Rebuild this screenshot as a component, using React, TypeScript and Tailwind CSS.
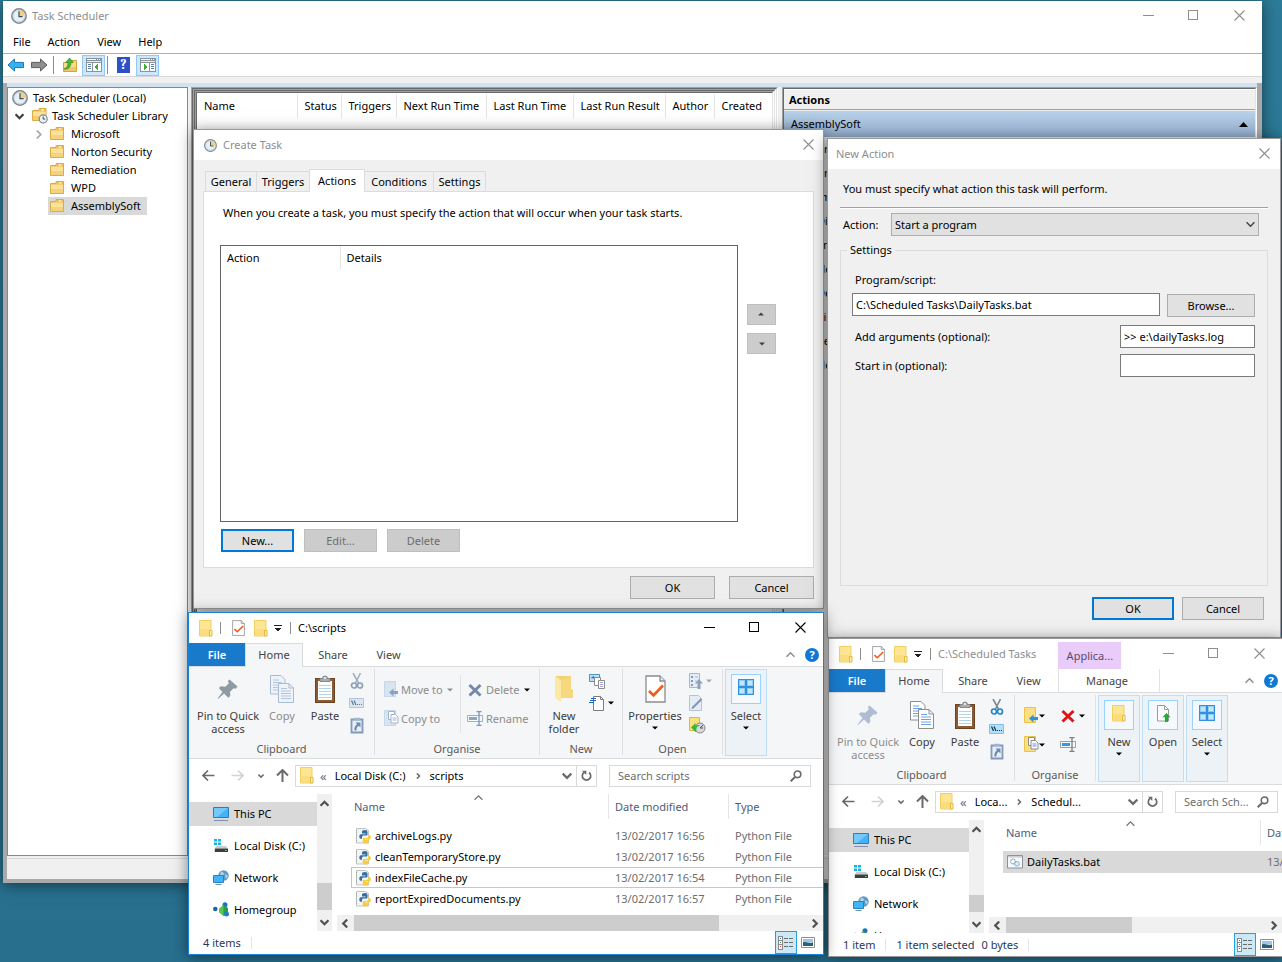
import React from 'react';
import type { ReactNode } from 'react';

/* ---------- icons ---------- */

const Clock = ({ size = 16 }: { size?: number }) => (
  <svg width={size} height={size} viewBox="0 0 16 16" className="shrink-0">
    <circle cx="8" cy="8" r="7.2" fill="#dfe9f2" stroke="#808a90" strokeWidth="1.5" />
    <circle cx="8" cy="8" r="5.8" fill="#e6f0f8" stroke="#b9c4cb" strokeWidth=".6" />
    <path d="M8 8V2.2A5.8 5.8 0 0 1 13.8 8z" fill="#f5cf7a" />
    <path d="M8 3.2V8.6h3.6" fill="none" stroke="#3e4f5e" strokeWidth="1.2" />
  </svg>
);

const TreeFolder = () => (
  <svg width="16" height="16" viewBox="0 0 16 16" className="shrink-0">
    <path d="M1.5 3.500h5.500v-2h7.500v12h-13z" fill="#f3cf72" stroke="#d9ac48" />
    <path d="M8 2h6v2H8z" fill="#e9b94c" />
    <path d="M9.500 3h3" stroke="#fffbe8" strokeWidth="1.200" />
    <path d="M2 5h12v4H2z" fill="#fbe19a" />
    <path d="M2 9h12v4H2z" fill="#f5d37c" />
  </svg>
);

const LibraryFolder = () => (
  <svg width="18" height="18" viewBox="0 0 18 18" className="shrink-0">
    <path d="M1.5 3.500h6.500v-2H15v12H1.500z" fill="#f3cf72" stroke="#d9ac48" />
    <path d="M9 2h5.500v2H9z" fill="#e9b94c" />
    <path d="M10 3h3" stroke="#fffbe8" strokeWidth="1.200" />
    <path d="M2 5h12.500v4H2z" fill="#fbe19a" />
    <circle cx="12.200" cy="11.900" r="4" fill="#eaf2f8" stroke="#7d8990" strokeWidth="1.200" />
    <path d="M12.200 9.500v2.600h2" fill="none" stroke="#3e4f5e" />
  </svg>
);

const Arrow = ({ left = false }: { left?: boolean }) => (
  <svg width="18" height="16" viewBox="0 0 18 16">
    {left ? (
      <path d="M1 8l6.500-6v3.400H16.500v5.200H7.500V14z" fill="#35b1ee" stroke="#1a76b8" />
    ) : (
      <path d="M17 8l-6.500-6v3.400H1.500v5.200H10.500V14z" fill="#8f8f8f" stroke="#5f5f5f" />
    )}
  </svg>
);

const UpFolder = () => (
  <svg width="16" height="16" viewBox="0 0 16 16">
    <path d="M1.500 5.500h7v-2H14.500v11h-13z" fill="#f7dc8a" stroke="#d2a63f" />
    <path d="M2 10h12v4H2z" fill="#efc964" />
    <path d="M2 12c3-.6 4-3.500 4-6.500H3.500L7.500 1l4 4.500H9c0 4-2.500 7.500-7 6.500z" fill="#49b53b" stroke="#2d8723" strokeWidth=".6" />
  </svg>
);

const PaneIcon = ({ flip = false }: { flip?: boolean }) => (
  <svg width="16" height="14" viewBox="0 0 16 14" shapeRendering="crispEdges">
    <path d="M0 0h16v14H0z" fill="#8a949c" />
    <path d="M1 1h9v1H1zM11 1h1v1h-1zM13 1h1v1h-1z" fill="#fff" />
    <path d="M1 3h14v1H1z" fill="#e8edf0" />
    <path d="M1 5h14v8H1z" fill="#fff" />
    {flip ? (
      <>
        <path d="M9 5h1v8H9z" fill="#8a949c" />
        <path d="M11 6h3v1h-3zM11 8h3v1h-3zM11 10h3v1h-3z" fill="#5c7fa6" />
        <path d="M4 6l4 3-4 3z" fill="#3fae2f" />
      </>
    ) : (
      <>
        <path d="M6 5h1v8H6z" fill="#8a949c" />
        <path d="M2 6h3v1H2zM2 8h3v1H2zM2 10h3v1H2z" fill="#5c7fa6" />
        <path d="M12 6L8 9l4 3z" fill="#3fae2f" />
      </>
    )}
  </svg>
);

const Minimize = () => (
  <svg width="11" height="11" viewBox="0 0 11 11" shapeRendering="crispEdges">
    <path d="M0 5.500h11" stroke="currentColor" />
  </svg>
);
const Maximize = () => (
  <svg width="11" height="11" viewBox="0 0 11 11" shapeRendering="crispEdges">
    <rect x=".5" y=".5" width="9" height="9" fill="none" stroke="currentColor" />
  </svg>
);
const Close = () => (
  <svg width="11" height="11" viewBox="0 0 11 11">
    <path d="M.5.500l10 10M10.500.500l-10 10" stroke="currentColor" strokeWidth="1.100" />
  </svg>
);

const Chevron = ({ dir, size = 8, w = 2 }: { dir: 'up' | 'down' | 'left' | 'right'; size?: number; w?: number }) => {
  const d = { up: 'M.5 6L4 2.500 7.500 6', down: 'M.5 2L4 5.500 7.500 2', left: 'M5.500.500L2 4l3.500 3.500', right: 'M2.500.500L6 4 2.500 7.500' }[dir];
  return (
    <svg width={size} height={size} viewBox="0 0 8 8" className="shrink-0">
      <path d={d} fill="none" stroke="currentColor" strokeWidth={w} />
    </svg>
  );
};

const Caret = () => (
  <svg width="6" height="4" viewBox="0 0 6 4" className="shrink-0">
    <path d="M0 .500h6L3 3.500z" fill="currentColor" />
  </svg>
);

const Folder = () => (
  <svg width="14" height="17" viewBox="0 0 14 17" className="shrink-0">
    <path d="M.5.500h11.500v15.500H.5z" fill="#fee591" stroke="#f0cf63" />
    <path d="M1 9h10.500v6.500H1z" fill="#fbdc7e" />
    <path d="M10.500 10.500h2.500v5.500h-2.500z" fill="#fdeeb5" stroke="#e5b93a" />
  </svg>
);

const CheckDoc = ({ w = 13, h = 16 }: { w?: number; h?: number }) => (
  <svg width={w} height={h} viewBox="0 0 21 28" className="shrink-0" preserveAspectRatio="none">
    <path d="M1 1h14l5 5v21H1z" fill="#fff" stroke="#8c8c8c" strokeWidth="1.300" />
    <path d="M15 1v5h5" fill="#e8e8e8" stroke="#8c8c8c" strokeWidth="1.300" />
    <path d="M4 16l4.500 4.500L18 10.500" fill="none" stroke="#f4591c" strokeWidth="2.600" />
  </svg>
);

const QuickMenu = () => (
  <svg width="8" height="8" viewBox="0 0 8 8" shapeRendering="crispEdges">
    <path d="M0 1h8v1H0zM1 4h6v1H1zM2 5h4v1H2zM3 6h2v1H3z" fill="#222" />
  </svg>
);

const Pin = ({ dim = false }: { dim?: boolean }) => (
  <svg width="22" height="22" viewBox="0 0 22 22">
    <path
      d="M12.500 1.500l8 7-1.800 2.200-2-.4-3.700 3.400.3 4.300-2 1.800-4.200-4.300L1 21 .6 20.600 5.500 14 1.800 10l2-1.700 4.500.4L12 5l-1.300-1.700z"
      fill={dim ? '#aebdd1' : '#8f9ba3'}
    />
  </svg>
);

const CopyPages = ({ dim = false, size = 28 }: { dim?: boolean; size?: number }) => {
  const line = dim ? '#b3c4de' : '#6fa1e8';
  const edge = dim ? '#a9bad3' : '#8d8d8d';
  const fill = dim ? '#eef3fa' : '#fff';
  return (
    <svg width={size} height={size} viewBox="0 0 28 28">
      <path d="M2.500.500h10.500l4 4v14.500H2.500z" fill={fill} stroke={edge} />
      <path d="M5 5h6M5 7.500h9M5 10h9M5 12.500h9M5 15h9" stroke={line} />
      <path d="M10.500 8.500H21l4.500 4.500v14.500h-15z" fill={fill} stroke={edge} />
      <path d="M21 8.500V13h4.500" fill="none" stroke={edge} />
      <path d="M13 13.500h6M13 16h10M13 18.500h10M13 21h10M13 23.500h10" stroke={line} strokeWidth="1.200" />
    </svg>
  );
};

const PasteBoard = () => (
  <svg width="22" height="28" viewBox="0 0 22 28">
    <rect x="1" y="3" width="20" height="25" rx="1" fill="#8a5a33" />
    <rect x="1.500" y="3.500" width="19" height="24" fill="none" stroke="#6c4322" />
    <path d="M4 6h14v19H4z" fill="#fdfeff" />
    <path d="M5 10.500h12M5 13.500h12M5 16.500h12M5 19.500h12M5 22.500h12" stroke="#b4d3e8" />
    <path d="M6 6.500V3.500h2.500a2.500 2.500 0 0 1 5 0H16v3z" fill="#a9adb0" stroke="#85898c" />
    <circle cx="11" cy="3" r="1.100" fill="#f3f3f3" />
  </svg>
);

const Scissors = ({ dim = false }: { dim?: boolean }) => (
  <svg width="14" height="16" viewBox="0 0 14 16">
    <path d="M3 0l5.500 10M10.500 0L5.500 10" stroke={dim ? '#9fb1c6' : '#7a8791'} strokeWidth="1.600" />
    <circle cx="4" cy="12.500" r="2.500" fill="none" stroke={dim ? '#8ca0bc' : '#2187cf'} strokeWidth="1.700" />
    <circle cx="10" cy="12.500" r="2.500" fill="none" stroke={dim ? '#8ca0bc' : '#2187cf'} strokeWidth="1.700" />
  </svg>
);

const PathIcon = ({ dim = false }: { dim?: boolean }) => (
  <svg width="15" height="10" viewBox="0 0 15 10">
    <path d="M.5.500h14v9H.5z" fill={dim ? '#dbe6f3' : '#b4e0fb'} stroke={dim ? '#b3c5dc' : '#7fbfe8'} />
    <path d="M2.500 2.500l2 4.500M5 2.500L7 7" stroke={dim ? '#5e7798' : '#12314d'} strokeWidth="1.200" />
    <path d="M8 6.500h1M10 6.500h1M12 6.500h1" stroke={dim ? '#5e7798' : '#12314d'} strokeWidth="1.200" />
  </svg>
);

const ShortcutIcon = () => (
  <svg width="14" height="17" viewBox="0 0 14 17">
    <path d="M1.500 2.500h11v13h-11z" fill="#e9eff7" stroke="#8299bb" strokeWidth="1.800" />
    <path d="M4 .800h6v2.700H4z" fill="#a2b5ce" />
    <path d="M5.500 5.500h5v5L8.700 8.800C7 10 6.300 11.500 6.500 13.500H4.500C4 11 5 8.800 7 7.200z" fill="#6f8bb2" />
  </svg>
);

const MoveTo = ({ color = false }: { color?: boolean }) => (
  <svg width="15" height="17" viewBox="0 0 15 17">
    <path d="M.5.500h11v15H.5z" fill={color ? '#fbdf82' : '#d9e4f1'} stroke={color ? '#ebc34e' : '#c7d6e9'} />
    <path d="M5 11.500l4.500-4v2.500h4.500v3H9.500v2.500z" fill={color ? '#2f8fdc' : '#8da3c4'} />
  </svg>
);

const CopyTo = ({ color = false }: { color?: boolean }) => (
  <svg width="15" height="17" viewBox="0 0 15 17">
    <path d="M.5.500h11v15H.5z" fill={color ? '#fbdf82' : '#d9e4f1'} stroke={color ? '#ebc34e' : '#c7d6e9'} />
    <path d="M4.500 1.500h6v8h-6z" fill="#fff" stroke={color ? '#8b8b8b' : '#9fb2cf'} />
    <path d="M7 4.500h4.500l2.500 2.500v6H7z" fill="#fff" stroke={color ? '#8b8b8b' : '#9fb2cf'} />
    <path d="M8.500 8h4M8.500 10h4" stroke={color ? '#5f93dd' : '#9fb2cf'} />
  </svg>
);

const DeleteX = ({ color = false }: { color?: boolean }) => (
  <svg width="14" height="14" viewBox="0 0 14 14">
    <path d="M1.500 2l11 10.500M12.500 2l-11 10.500" stroke={color ? '#dd1518' : '#7488ab'} strokeWidth="3" />
  </svg>
);

const Rename = ({ color = false }: { color?: boolean }) => (
  <svg width="17" height="15" viewBox="0 0 17 15">
    <path d="M.5 4.500h15v6H.5z" fill="#f7fafd" stroke={color ? '#9aa0a6' : '#9bb0cc'} />
    <path d="M2 6h8v3H2z" fill={color ? '#2f9bf0' : '#8ea5c4'} />
    <path d="M9.500.700h5M9.500 14.300h5M12 1v13" stroke={color ? '#7b8085' : '#7f95b5'} strokeWidth="1.300" />
  </svg>
);

const BigFolder = () => (
  <svg width="20" height="28" viewBox="0 0 20 28">
    <path d="M2 1h15v13l2 1v8H6z" fill="#f3d171" />
    <path d="M1 1l6 4v22l-6-4z" fill="#fde9a4" />
    <path d="M7 5l10-4v15l2 1v6H7z" fill="#f7d87e" />
  </svg>
);

const NewItem = () => (
  <svg width="17" height="17" viewBox="0 0 17 17">
    <path d="M.5 1.500h10v7H.5z" fill="#bfe2f5" stroke="#4d92b8" />
    <path d="M1.500 5l3-2 3 3z" fill="#2e7da8" />
    <path d="M5.500 4.500h6v8h-6z" fill="#fff" stroke="#8c8c8c" />
    <path d="M9.500 7.500h6v8h-6z" fill="#fff" stroke="#8c8c8c" />
    <path d="M11 9.500h3M11 11.500h3M11 13.500h3" stroke="#a7a3c8" />
  </svg>
);

const EasyAccess = () => (
  <svg width="16" height="16" viewBox="0 0 16 16">
    <path d="M4.500 1.500h7l3 3v11h-10z" fill="#fff" stroke="#7c7c7c" />
    <path d="M11.500 1.500v3h3" fill="none" stroke="#7c7c7c" />
    <path d="M2 3.500h5M1 5.500h6M0 7.500h5" stroke="#1f66ad" strokeWidth="1.200" />
  </svg>
);

const OpenIcon = () => (
  <svg width="14" height="16" viewBox="0 0 14 16">
    <path d="M.5.500h10v14H.5z" fill="#e6edf6" stroke="#a5b6d0" />
    <path d="M2 3h2v2H2zM2 7h2v2H2zM2 11h2v2H2z" fill="#8299be" />
    <path d="M6 4h3M6 8h2" stroke="#a5b6d0" />
    <path d="M10 6l4 4.500h-2.500V16h-3v-5.500H6z" fill="#8da0bf" />
  </svg>
);

const EditIcon = () => (
  <svg width="14" height="16" viewBox="0 0 14 16">
    <path d="M.5.500h9l3 3v12H.5z" fill="#e4ecf6" stroke="#b3c3da" />
    <path d="M4 12.500l8.500-8.500" stroke="#8397b5" strokeWidth="2.200" />
    <path d="M2.500 14l1-2.500 1.500 1.500z" fill="#6d83a6" />
  </svg>
);

const HistoryIcon = () => (
  <svg width="17" height="17" viewBox="0 0 17 17">
    <path d="M.5.500h10v13H.5z" fill="#fbe07c" stroke="#ddb741" />
    <circle cx="11" cy="11" r="5" fill="#d7dadc" stroke="#84888b" />
    <path d="M11 11l3-3M11 11h3" stroke="#555" />
    <path d="M2 10.500L6.500 6v2.500c3-1 4-.500 4.500.500-2.500 0-4 1-3.500 5.500l-1 .5z" fill="#3bb53a" />
  </svg>
);

const SelectGrid = () => (
  <svg width="16" height="16" viewBox="0 0 16 16" shapeRendering="crispEdges">
    <path d="M0 0h16v16H0z" fill="#3390df" />
    <path d="M1 1h6v6H1zM9 1h6v6H9zM1 9h6v6H1zM9 9h6v6H9z" fill="#8fcdf9" />
    <path d="M2 2h4v4H2zM10 2h4v4h-4zM2 10h4v4H2zM10 10h4v4h-4z" fill="#c4e6fd" />
  </svg>
);

const OpenDoc = () => (
  <svg width="15" height="17" viewBox="0 0 15 17">
    <path d="M1.500.500h7l4 4v11.500h-11z" fill="#fbfbfb" stroke="#9b9b9b" />
    <path d="M8.500.500v4h4" fill="none" stroke="#9b9b9b" />
    <path d="M10.500 8l4 4.300H12V17H9v-4.700H6.500z" fill="#19b02a" />
  </svg>
);

const NavArrow = ({ dir }: { dir: 'left' | 'right' | 'up' }) => (
  <svg width="13" height="13" viewBox="0 0 13 13" className="shrink-0">
    {dir === 'left' && <path d="M6 1.500l-5 5 5 5M1 6.500h11.500" fill="none" stroke="currentColor" strokeWidth="1.700" />}
    {dir === 'right' && <path d="M7 1.500l5 5-5 5M12 6.500H.5" fill="none" stroke="currentColor" strokeWidth="1.700" />}
    {dir === 'up' && <path d="M1 6.500l5.500-5.500L12 6.500M6.500 1v12" fill="none" stroke="currentColor" strokeWidth="2" />}
  </svg>
);

const Refresh = () => (
  <svg width="11" height="12" viewBox="0 0 11 12">
    <path d="M8 2.500a4.200 4.200 0 1 1-5 0" fill="none" stroke="#6a6a6a" strokeWidth="1.700" />
    <path d="M1 .800h4.300V5z" fill="#6a6a6a" />
  </svg>
);

const Magnifier = () => (
  <svg width="12" height="12" viewBox="0 0 12 12" className="shrink-0">
    <circle cx="7.500" cy="4.300" r="3.300" fill="none" stroke="#6a6a6a" strokeWidth="1.600" />
    <path d="M5 7L.7 11.300" stroke="#6a6a6a" strokeWidth="2" />
  </svg>
);

const PcIcon = () => (
  <svg width="16" height="16" viewBox="0 0 16 16">
    <path d="M.5 1.500h15v10H.5z" fill="#45b2f7" stroke="#2a7fb8" />
    <path d="M1 2h14L4 11H1z" fill="#74c9fb" />
    <path d="M1 14.500h14" stroke="#7f8fae" />
  </svg>
);
const DiskIcon = () => (
  <svg width="16" height="16" viewBox="0 0 16 16">
    <path d="M1 1h3v2.500H1zM5 1h3v2.500H5zM1 4.500h3V7H1zM5 4.500h3V7H5z" fill="#14b3ea" />
    <path d="M3.500 8h9.500l2 2.500H1.800z" fill="#c9ccce" />
    <path d="M1.800 10.500H15V14H1.800z" fill="#3c3f41" />
    <path d="M12 12h1.500v1H12z" fill="#5fe35a" />
  </svg>
);
const NetworkIcon = () => (
  <svg width="16" height="16" viewBox="0 0 16 16">
    <circle cx="10.500" cy="5.500" r="5.200" fill="#5f9cc2" />
    <path d="M8 1.500l3 1.500-1 3-3 0zM12 4l3 2-2 3z" fill="#b8d6e6" />
    <path d="M.5 5.500h10v7H.5z" fill="#3fb4fa" stroke="#2a82bb" />
    <path d="M2.500 14.500h6" stroke="#6d93ad" />
  </svg>
);
const HomegroupIcon = () => (
  <svg width="16" height="16" viewBox="0 0 16 16">
    <circle cx="2.300" cy="7" r="2.300" fill="#1a63b5" />
    <circle cx="12" cy="2.700" r="2.500" fill="#1a72c4" />
    <path d="M6 7l4.500-4L15 6v6l-4.500 2L6 10z" fill="#2f9e3d" />
    <path d="M6 7l4.500-4v10.500L6 10z" fill="#5cc552" />
    <circle cx="13.500" cy="12" r="2.500" fill="#1f7ed0" />
  </svg>
);

const PyIcon = () => (
  <svg width="16" height="16" viewBox="0 0 16 16" className="shrink-0">
    <path d="M1.500.500h9l3 2v12.500h-12z" fill="#f3f4f4" stroke="#bfc3c5" />
    <path d="M1.500 2v12" stroke="#9ea3a6" strokeDasharray="1 1.500" />
    <path d="M10 2c-2.500 0-3 .7-3 2v1.500h3.500v.700H6C4.700 6.200 4.300 7.200 4.300 8.500s.5 2.200 1.500 2.200H7V9.200c0-1 .7-1.700 1.700-1.700h2.500c.8 0 1.300-.5 1.300-1.300V4c0-1.200-.8-2-2.500-2z" fill="#356f9f" />
    <path d="M10.500 15.500c2.500 0 3-.7 3-2V12H10v-.5h4.200c1.200 0 1.600-1 1.600-2.300S15.300 7 14.300 7H13.200v1.200c0 1-.7 1.700-1.700 1.700H9c-.8 0-1.300.5-1.300 1.300v2.300c0 1.200.8 2 2.800 2z" fill="#f9cd3d" />
  </svg>
);
const BatIcon = () => (
  <svg width="16" height="14" viewBox="0 0 16 14" className="shrink-0">
    <path d="M.5.500h15v12.500H.5z" fill="#f7f9fa" stroke="#8d9397" />
    <path d="M1 1h14v1.500H1z" fill="#c8cdd0" />
    <circle cx="6" cy="6.500" r="2.300" fill="#fff" stroke="#8d989f" strokeDasharray="1.200 .6" strokeWidth="1.200" />
    <circle cx="10" cy="8.800" r="2.300" fill="#d9eefc" stroke="#7fa9c4" strokeDasharray="1.200 .6" strokeWidth="1.200" />
  </svg>
);
const DetailsView = () => (
  <svg width="16" height="14" viewBox="0 0 16 14" shapeRendering="crispEdges">
    <path d="M.5.500h4v12.500h-4zM1 4.500h3M1 8.500h3" fill="#fff" stroke="#8b8b8b" />
    <path d="M2 2h1v1H2z" fill="#2b6cb0" />
    <path d="M2 6h1v1H2z" fill="#4a8f4a" />
    <path d="M2 10h1v1H2z" fill="#d33" />
    <path d="M6 2.500h4M11 2.500h4M6 6.500h4M11 6.500h4M6 10.500h4M11 10.500h4" stroke="#6c6c6c" />
  </svg>
);
const ThumbView = () => (
  <svg width="14" height="11" viewBox="0 0 14 11">
    <path d="M.5.500h13v10H.5z" fill="#fff" stroke="#8f8f8f" />
    <path d="M2 2h10v3.500H2z" fill="#9bc7ee" />
    <path d="M2 5.500C5 4 8 7 12 5.500V9H2z" fill="#2c5f78" />
  </svg>
);

/* ---------- shared pieces ---------- */

const Controls = ({ className }: { className: string }) => (
  <div className={`flex h-7 self-start ${className}`}>
    <button aria-label="Minimize" className="grid w-[46px] place-items-center"><Minimize /></button>
    <button aria-label="Maximize" className="grid w-[45px] place-items-center"><Maximize /></button>
    <button aria-label="Close" className="grid w-[46px] place-items-center"><Close /></button>
  </div>
);

const PushButton = ({ children, primary, disabled, className }: { children: ReactNode; primary?: boolean; disabled?: boolean; className: string }) => (
  <button
    disabled={disabled}
    className={`grid h-[23px] place-items-center ${
      primary ? 'border-2 border-[#0078d7] bg-[#e1e1e1]' : disabled ? 'border border-[#bfbfbf] bg-[#cccccc] text-[#6d6d6d]' : 'border border-[#adadad] bg-[#e1e1e1]'
    } ${className}`}
  >
    {children}
  </button>
);

const Sunken = ({ depth, children }: { depth: number; children: ReactNode }) => (
  <div className="flex min-h-0 flex-1 border border-t-[#a0a0a0] border-r-white border-b-white border-l-[#a0a0a0]">
    <div className="flex min-h-0 flex-1 border border-t-[#696969] border-r-[#e3e3e3] border-b-[#e3e3e3] border-l-[#696969]">
      {depth > 1 ? <Sunken depth={depth - 1}>{children}</Sunken> : children}
    </div>
  </div>
);

/* ---------- Task Scheduler ---------- */

const LIST_COLUMNS: [string, string][] = [
  ['Name', 'w-[100px]'],
  ['Status', 'w-[44px]'],
  ['Triggers', 'w-[55px]'],
  ['Next Run Time', 'w-[90px]'],
  ['Last Run Time', 'w-[87px]'],
  ['Last Run Result', 'w-[92px]'],
  ['Author', 'w-[49px]'],
  ['Created', 'w-auto'],
];

const SIDE_ACTIONS = [
  'Create Basic Task...', 'Create Task...', 'Import Task...', 'Display All Running Tasks', 'Enable All Tasks History',
  'New Folder...', 'Delete Folder', 'View', 'Refresh', 'Help',
];

const TaskScheduler = () => (
  <section className="absolute top-px left-[3px] flex h-[882px] w-[1259px] flex-col bg-white shadow-[0_2px_14px_rgba(0,0,0,0.5)]">
    <header className="flex h-[30px] shrink-0 items-center pl-2 text-[#8e8e8e]">
      <Clock />
      <h1 className="ml-[5px] flex-1">Task Scheduler</h1>
      <Controls className="text-[#8e8e8e]" />
    </header>
    <nav className="flex h-[22px] shrink-0 items-center gap-[17px] pl-[10px]">
      <button>File</button>
      <button>Action</button>
      <button>View</button>
      <button>Help</button>
    </nav>
    <div className="flex h-6 shrink-0 items-center border-y border-t-[#abb0b8] border-b-[#d7d7d7] pl-1">
      <button aria-label="Back"><Arrow left /></button>
      <button aria-label="Forward" className="ml-[5px]"><Arrow /></button>
      <span className="mr-2 ml-[5px] h-[18px] w-px bg-[#8c8c8c]" />
      <button aria-label="Up one level"><UpFolder /></button>
      <button aria-label="Show console tree" className="ml-1 grid h-[21px] w-[23px] place-items-center border border-[#90c8f6] bg-[#cce8ff]"><PaneIcon /></button>
      <span className="ml-0.5 h-[18px] w-px bg-[#8c8c8c]" />
      <button aria-label="Help" className="ml-[9px] grid h-4 w-[13px] place-items-center bg-[#2c50c8] font-serif text-[14px] leading-4 font-bold text-white">?</button>
      <button aria-label="Show action pane" className="ml-[6px] grid h-[21px] w-[23px] place-items-center border border-[#90c8f6] bg-[#cce8ff]"><PaneIcon flip /></button>
    </div>
    <div className="h-[6px] shrink-0 bg-[#f0f0f0]" />
    <div className="flex min-h-0 flex-1 flex-col border-r-5 border-b-4 border-l-4 border-[#a9a9a9] bg-[#f0f0f0]">
      <div className="h-1 shrink-0 bg-[#d3e2f0]" />
      <div className="flex min-h-0 flex-1">
        <ul className="w-[181px] border border-[#828790] bg-white pt-px">
          <li className="flex h-[18px] items-center pl-1"><Clock /><span className="ml-[5px]">Task Scheduler (Local)</span></li>
          <li className="flex h-[18px] items-center pl-[7px] text-[#404040]">
            <Chevron dir="down" size={9} />
            <span className="ml-[7px]"><LibraryFolder /></span>
            <span className="ml-[3px] text-black">Task Scheduler Library</span>
          </li>
          {['Microsoft', 'Norton Security', 'Remediation', 'WPD', 'AssemblySoft'].map((name, i) => (
            <li key={name} className="flex h-[18px] items-center pl-[26px] text-[#a6a6a6]">
              <span className="w-[14px]">{i === 0 && <Chevron dir="right" size={9} w={1.5} />}</span>
              <span className={`flex h-[18px] items-center gap-[6px] pr-[6px] pl-px text-black ${i === 4 ? 'bg-[#d9d9d9]' : ''}`}>
                <TreeFolder />{name}
              </span>
            </li>
          ))}
        </ul>
        <div className="ml-[3px] flex min-w-0 flex-1">
          <Sunken depth={3}>
            <div className="flex-1 bg-white pt-px">
              <table className="w-full table-fixed border-collapse">
                <thead>
                  <tr className="h-6">
                    {LIST_COLUMNS.map(([name, width]) => (
                      <th key={name} className={`${width} overflow-hidden border-r border-[#e5e5e5] pl-[7px] text-left font-normal whitespace-nowrap last:border-r-0`}>{name}</th>
                    ))}
                  </tr>
                </thead>
              </table>
            </div>
          </Sunken>
        </div>
        <div className="ml-1 flex w-[475px]">
          <Sunken depth={1}>
            <div className="flex min-w-0 flex-1 flex-col border-t border-white">
              <h2 className="flex h-5 shrink-0 items-center border-b border-[#a0a0a0] pl-[5px] font-bold">Actions</h2>
              <button className="mt-px flex h-[26px] shrink-0 items-center justify-between bg-linear-to-b from-[#b9d1ea] to-[#93accb] pr-[7px] pl-[7px]">
                AssemblySoft
                <svg width="9" height="5" viewBox="0 0 9 5"><path d="M4.500 0L9 5H0z" /></svg>
              </button>
              <ul>
                {SIDE_ACTIONS.map((name) => (
                  <li key={name} className="flex h-[24px] items-center pl-[33px]">{name}</li>
                ))}
              </ul>
            </div>
          </Sunken>
        </div>
      </div>
      <footer className="mt-0.5 h-[21px] shrink-0 border-t border-[#d7d7d7]" />
    </div>
  </section>
);

/* ---------- Create Task ---------- */

const CreateTask = () => (
  <section className="absolute top-[129px] left-[193px] flex h-[480px] w-[631px] flex-col border border-[#999] bg-[#f0f0f0] shadow-[0_2px_14px_rgba(0,0,0,0.5)]">
    <header className="flex h-[30px] items-center justify-between bg-white pr-[9px] pl-[10px] text-[#8e8e8e]">
      <h2 className="flex items-center gap-[6px]"><Clock size={13} />Create Task</h2>
      <button aria-label="Close" className="pb-px"><Close /></button>
    </header>
    <div className="flex flex-1 flex-col px-[9px] pt-[9px] pb-[9px]">
      <div className="flex items-end pl-0.5" role="tablist">
        {['General', 'Triggers', 'Actions', 'Conditions', 'Settings'].map((name, i) =>
          i === 2 ? (
            <button key={name} role="tab" aria-selected className="relative -mb-px h-[23px] w-[56px] border border-b-0 border-[#dcdcdc] bg-white pb-px">{name}</button>
          ) : (
            <button key={name} role="tab" className={`h-5 border border-b-0 border-[#dcdcdc] text-center ${i === 3 ? 'w-[69px] border-l-0' : 'w-[52px]'} ${i === 1 ? 'border-x-0' : ''} ${i === 4 ? 'border-l-0' : ''}`}>{name}</button>
          ),
        )}
      </div>
      <div className="flex flex-1 flex-col border border-[#dcdcdc] bg-white px-4 pt-[13px] pb-[15px]">
        <p className="pl-[3px]">When you create a task, you must specify the action that will occur when your task starts.</p>
        <div className="mt-6 flex flex-1 items-start gap-[9px]">
          <div className="h-full w-[518px] border border-[#646464]">
            <table className="w-full table-fixed border-collapse">
              <thead>
                <tr className="h-6">
                  <th className="w-[119px] border-r border-[#e5e5e5] pl-[6px] text-left font-normal">Action</th>
                  <th className="pl-[6px] text-left font-normal">Details</th>
                </tr>
              </thead>
            </table>
          </div>
          <div className="flex flex-col gap-2 pt-[59px]">
            <button aria-label="Move up" className="grid h-[21px] w-[29px] rotate-180 place-items-center border border-[#bfbfbf] bg-[#cccccc] text-[#404040]"><Caret /></button>
            <button aria-label="Move down" className="grid h-[21px] w-[29px] place-items-center border border-[#bfbfbf] bg-[#cccccc] text-[#404040]"><Caret /></button>
          </div>
        </div>
        <div className="mt-[7px] flex gap-[10px] pl-px">
          <PushButton primary className="w-[73px]">New...</PushButton>
          <PushButton disabled className="w-[73px]">Edit...</PushButton>
          <PushButton disabled className="w-[73px]">Delete</PushButton>
        </div>
      </div>
      <div className="mt-2 flex justify-end gap-[14px]">
        <PushButton className="w-[85px]">OK</PushButton>
        <PushButton className="w-[85px]">Cancel</PushButton>
      </div>
    </div>
  </section>
);

/* ---------- New Action ---------- */

const NewAction = () => (
  <section className="absolute top-[138px] left-[827px] flex h-[500px] w-[454px] flex-col border border-[#999] bg-[#f0f0f0] shadow-[0_2px_14px_rgba(0,0,0,0.5)]">
    <header className="flex h-[30px] items-center justify-between bg-white pr-[10px] pl-2 text-[#8e8e8e]">
      <h2>New Action</h2>
      <button aria-label="Close" className="pb-px"><Close /></button>
    </header>
    <div className="flex flex-1 flex-col px-3 pt-3 pb-[17px]">
      <p className="pl-[3px]">You must specify what action this task will perform.</p>
      <hr className="mt-[10px] h-0.5 border-t border-b border-t-[#a0a0a0] border-b-white" />
      <div className="mt-1 flex items-center pl-[3px] pr-[9px]">
        <label htmlFor="kind" className="w-12">Action:</label>
        <div className="relative flex-1">
          <select id="kind" className="h-[23px] w-full appearance-none border border-[#adadad] bg-[#e1e1e1] pl-[3px]">
            <option>Start a program</option>
          </select>
          <span className="pointer-events-none absolute top-[7px] right-1 text-[#404040]"><Chevron dir="down" size={9} w={1.2} /></span>
        </div>
      </div>
      <fieldset className="mt-[6px] flex-1 border border-[#dcdcdc] pt-[14px] pr-3 pl-[11px]">
        <legend className="-ml-[5px] px-[3px]">Settings</legend>
        <label htmlFor="program" className="block pl-[3px]">Program/script:</label>
        <div className="mt-[5px] flex gap-[7px]">
          <input id="program" defaultValue="C:\Scheduled Tasks\DailyTasks.bat" className="h-[23px] min-w-0 flex-1 border border-[#7a7a7a] bg-white px-[3px]" />
          <PushButton className="mt-px w-[88px]">Browse...</PushButton>
        </div>
        <div className="mt-2 flex items-center justify-between pl-[3px]">
          <label htmlFor="args">Add arguments (optional):</label>
          <input id="args" defaultValue=">> e:\dailyTasks.log" className="h-[23px] w-[135px] border border-[#7a7a7a] bg-white px-[3px]" />
        </div>
        <div className="mt-[6px] flex items-center justify-between pl-[3px]">
          <label htmlFor="start">Start in (optional):</label>
          <input id="start" className="h-[23px] w-[135px] border border-[#7a7a7a] bg-white px-[3px]" />
        </div>
      </fieldset>
      <div className="mt-[11px] flex justify-end gap-2 pr-1">
        <PushButton primary className="w-[82px]">OK</PushButton>
        <PushButton className="w-[82px]">Cancel</PushButton>
      </div>
    </div>
  </section>
);

/* ---------- Explorer ---------- */

const Group = ({ label, className, children }: { label: string; className: string; children: ReactNode }) => (
  <div className={`relative flex flex-col ${className}`}>
    <div className="flex h-[74px] items-start">{children}</div>
    <p className="text-center text-[#5a5a5a]">{label}</p>
  </div>
);

const Rule = () => <span className="mt-0.5 h-[86px] w-px bg-[#dfe1e4]" />;

const BigButton = ({ icon, children, className, dim, menu }: { icon: ReactNode; children: ReactNode; className: string; dim?: boolean; menu?: boolean }) => (
  <button className={`flex shrink-0 flex-col items-center pt-2 leading-[13px] ${dim ? 'text-[#8c8c8c]' : 'text-[#3b3b3b]'} ${className}`}>
    <span className="mb-[6px] grid h-7 place-items-center">{icon}</span>
    {children}
    {menu && <span className="mt-[4px] text-black"><Caret /></span>}
  </button>
);

const SmallIcon = ({ label, children, menu, dim }: { label: string; children: ReactNode; menu?: boolean; dim?: boolean }) => (
  <button aria-label={label} className={`flex h-[22px] items-center gap-[3px] ${dim ? 'text-[#a8a8a8]' : 'text-black'}`}>
    {children}
    {menu && <Caret />}
  </button>
);

const Tile = ({ icon, label, menu }: { icon: ReactNode; label: string; menu?: boolean }) => (
  <button className="mt-0.5 flex h-[87px] w-[42px] flex-col items-center border border-[#bfdef7] bg-[#edf2f7] pt-1 leading-[13px] text-[#3b3b3b]">
    <span className="mb-[5px] grid h-[30px] w-[30px] place-items-center border border-[#99d1ff] bg-[#f5f9fd] pb-1">{icon}</span>
    {label}
    {menu && <span className="mt-1 text-black"><Caret /></span>}
  </button>
);

const Clipboard = ({ hasSelection }: { hasSelection: boolean }) => (
  <Group label="Clipboard" className="w-[185px]">
    <BigButton dim={hasSelection} icon={<Pin dim={hasSelection} />} className="ml-[5px] w-[68px]">Pin to Quick<br />access</BigButton>
    <BigButton dim={!hasSelection} icon={<CopyPages dim={!hasSelection} />} className="w-10">Copy</BigButton>
    <BigButton icon={<PasteBoard />} className="ml-px w-11">Paste</BigButton>
    <div className="ml-0.5 flex flex-col items-center pt-[3px]">
      <SmallIcon label="Cut"><Scissors dim={!hasSelection} /></SmallIcon>
      <SmallIcon label="Copy path"><PathIcon dim={!hasSelection} /></SmallIcon>
      <SmallIcon label="Paste shortcut"><ShortcutIcon /></SmallIcon>
    </div>
  </Group>
);

const WideRibbon = () => (
  <>
    <Clipboard hasSelection={false} />
    <Rule />
    <Group label="Organise" className="w-[164px]">
      <div className="mt-2 ml-[9px] flex w-[77px] flex-col border-r border-[#dfe1e4] text-[#8c8c8c]">
        <button className="flex h-[29px] items-center gap-0.5"><MoveTo />Move to<span className="ml-0.5"><Caret /></span></button>
        <button className="flex h-[29px] items-center gap-0.5"><CopyTo />Copy to</button>
      </div>
      <div className="mt-2 ml-[6px] text-[#8c8c8c]">
        <button className="flex h-[29px] items-center"><span className="w-[19px] pl-px"><DeleteX /></span>Delete<span className="ml-[5px] text-black"><Caret /></span></button>
        <button className="flex h-[29px] items-center"><span className="w-[19px]"><Rename /></span>Rename</button>
      </div>
    </Group>
    <Rule />
    <Group label="New" className="w-[82px]">
      <BigButton icon={<BigFolder />} className="ml-0.5 w-11">New<br />folder</BigButton>
      <div className="pt-[3px] pl-[3px]">
        <SmallIcon label="New item"><NewItem /></SmallIcon>
        <SmallIcon label="Easy access" menu><EasyAccess /></SmallIcon>
      </div>
    </Group>
    <Rule />
    <Group label="Open" className="w-[99px]">
      <BigButton menu icon={<CheckDoc w={21} h={28} />} className="ml-[3px] w-[58px]">Properties</BigButton>
      <div className="pt-[3px] pl-[5px]">
        <SmallIcon label="Open" menu dim><OpenIcon /></SmallIcon>
        <SmallIcon label="Edit"><EditIcon /></SmallIcon>
        <SmallIcon label="History"><HistoryIcon /></SmallIcon>
      </div>
    </Group>
    <Rule />
    <div className="ml-0.5"><Tile icon={<SelectGrid />} label="Select" menu /></div>
  </>
);

const NarrowRibbon = () => (
  <>
    <Clipboard hasSelection />
    <Rule />
    <Group label="Organise" className="w-[80px]">
      <div className="mt-2 ml-[9px] w-9">
        <button aria-label="Move to" className="flex h-[29px] items-center"><MoveTo color /><Caret /></button>
        <button aria-label="Copy to" className="flex h-[29px] items-center"><CopyTo color /><Caret /></button>
      </div>
      <div className="mt-2">
        <button aria-label="Delete" className="flex h-[29px] items-center gap-1 pl-px"><DeleteX color /><Caret /></button>
        <button aria-label="Rename" className="flex h-[29px] items-center"><Rename color /></button>
      </div>
    </Group>
    <Rule />
    <div className="ml-0.5 flex gap-0.5">
      <Tile icon={<Folder />} label="New" menu />
      <Tile icon={<OpenDoc />} label="Open" />
      <Tile icon={<SelectGrid />} label="Select" menu />
    </div>
  </>
);

interface ExplorerProps {
  title: string;
  frame: string;
  active?: boolean;
  contextTab?: boolean;
  ribbon: ReactNode;
  crumbs: string[];
  addressWidth: string;
  search: string;
  searchWidth: string;
  navWidth: string;
  navThumb: string;
  table: ReactNode;
  sortCaret: string;
  listThumb: string;
  status: ReactNode;
}

const Explorer = (p: ExplorerProps) => (
  <section className={`absolute flex flex-col border bg-white ${p.frame}`}>
    <header className="flex h-[30px] shrink-0 items-center pl-[10px]">
      <Folder />
      <span className="mx-[7px] h-3 w-px bg-[#8c8c8c]" />
      <span className="ml-1"><CheckDoc /></span>
      <span className="ml-[9px]"><Folder /></span>
      <button aria-label="Customise toolbar" className="ml-[6px]"><QuickMenu /></button>
      <span className="mr-[7px] ml-[8px] h-3 w-px bg-[#8c8c8c]" />
      <h2 className={p.active ? '' : 'text-[#8e8e8e]'}>{p.title}</h2>
      {p.contextTab && <span className="ml-[22px] flex h-[27px] w-[63px] items-center justify-center self-end bg-[#eaccfb] text-[#5a4a66]">Applica...</span>}
      <Controls className={`ml-auto ${p.active ? 'text-black' : 'text-[#8e8e8e]'}`} />
    </header>
    <div className="flex h-[24px] shrink-0 items-stretch border-b border-[#dadbdc] text-[#444]">
      <button className="w-14 bg-[#1979ca] font-semibold text-white">File</button>
      <button className="-mb-px w-[58px] border border-b-0 border-[#dadbdc] bg-[#f5f6f7] pb-px">Home</button>
      <button className="w-[60px]">Share</button>
      <button className="w-[51px]">View</button>
      {p.contextTab && <button className="ml-1 w-[102px] border-x border-[#e2e2e2] pr-1">Manage</button>}
      <div className="ml-auto flex items-center gap-[10px] pr-1 text-[#8c8c8c]">
        <button aria-label="Collapse ribbon"><Chevron dir="up" size={9} w={1.300} /></button>
        <button aria-label="Help" className="grid h-[14px] w-[14px] place-items-center rounded-full bg-[#0f78d4] text-[11px] leading-[14px] font-bold text-white">?</button>
      </div>
    </div>
    <div className="flex h-[92px] shrink-0 items-start border-b border-[#dadbdc] bg-[#f5f6f7]">{p.ribbon}</div>
    <div className="flex h-[35px] shrink-0 items-center pb-0.5 pl-[13px] text-[#6a6a6a]">
      <button aria-label="Back"><NavArrow dir="left" /></button>
      <button aria-label="Forward" className="ml-4 text-[#d2d2d2]"><NavArrow dir="right" /></button>
      <button aria-label="Recent locations" className="ml-[14px]"><Chevron dir="down" size={6} /></button>
      <button aria-label="Up" className="ml-[12px]"><NavArrow dir="up" /></button>
      <div className={`ml-[6px] flex h-[22px] items-stretch border border-[#d9d9d9] ${p.addressWidth}`}>
        <div className="flex flex-1 items-center pl-1">
          <Folder />
          <span className="mr-[8px] ml-[6px] text-[13px] leading-4">«</span>
          <button className="text-black">{p.crumbs[0]}</button>
          <span className="mx-[9px]"><Chevron dir="right" size={6} /></span>
          <button className="text-black">{p.crumbs[1]}</button>
          <span className="mr-1 ml-auto"><Chevron dir="down" size={10} w={1.800} /></span>
        </div>
        <button aria-label="Refresh" className="grid w-[20px] place-items-center border-l border-[#d9d9d9]"><Refresh /></button>
      </div>
      <label className={`ml-3 flex h-[22px] items-center border border-[#d9d9d9] pr-2 pl-2 ${p.searchWidth}`}>
        <input aria-label={p.search} placeholder={p.search} className="min-w-0 flex-1 bg-transparent outline-none placeholder:text-[#6d6d6d]" />
        <Magnifier />
      </label>
    </div>
    <div className="flex min-h-0 flex-1">
      <ul className={`flex h-full shrink-0 flex-col gap-2 overflow-hidden pt-2 ${p.navWidth}`}>
        {[
          ['This PC', <PcIcon key="i" />],
          ['Local Disk (C:)', <DiskIcon key="i" />],
          ['Network', <NetworkIcon key="i" />],
          ['Homegroup', <HomegroupIcon key="i" />],
        ].map(([name, icon], i) => (
          <li key={i} className={`flex h-6 shrink-0 items-center gap-[5px] pl-6 whitespace-nowrap ${i === 0 ? 'bg-[#d9d9d9]' : ''}`}>{icon}{name}</li>
        ))}
      </ul>
      <div className="flex w-[15px] shrink-0 flex-col items-center bg-[#f0f0f0] pt-[5px] pb-1 text-[#505050]">
        <Chevron dir="up" size={9} />
        <div className={`mt-auto w-full bg-[#cdcdcd] ${p.navThumb}`} />
        <Chevron dir="down" size={9} />
      </div>
      <div className="flex min-w-0 flex-1 flex-col pl-[5px]">
        <div className="relative flex-1">
          {p.table}
          <span className={`absolute -top-px text-[#707070] ${p.sortCaret}`}><Chevron dir="up" size={9} w={1} /></span>
        </div>
        <div className="flex h-4 shrink-0 items-center bg-[#f0f0f0] px-1 text-[#505050]">
          <Chevron dir="left" size={9} />
          <div className={`ml-1 h-full bg-[#cdcdcd] ${p.listThumb}`} />
          <span className="ml-auto"><Chevron dir="right" size={9} /></span>
        </div>
      </div>
    </div>
    <footer className="flex h-[23px] shrink-0 items-center pl-[14px] text-[#1e395b]">
      {p.status}
      <div className="mr-[26px] ml-auto grid h-[23px] w-[22px] place-items-center border border-[#26a0da] bg-[#cbe8f6]"><DetailsView /></div>
      <div className="-ml-[22px] pr-2"><ThumbView /></div>
    </footer>
  </section>
);

const FILES: [string, string][] = [
  ['archiveLogs.py', '13/02/2017 16:56'],
  ['cleanTemporaryStore.py', '13/02/2017 16:56'],
  ['indexFileCache.py', '13/02/2017 16:54'],
  ['reportExpiredDocuments.py', '13/02/2017 16:57'],
];

const ScriptFiles = () => (
  <div className="pl-[14px]">
    <table className="w-full table-fixed border-separate border-spacing-0">
      <thead>
        <tr className="h-[25px] text-[#4c607a]">
          <th className="w-[258px] border-r border-[#e5e5e5] pl-[3px] text-left font-normal">Name</th>
          <th className="w-[120px] border-r border-[#e5e5e5] pl-[6px] text-left font-normal">Date modified</th>
          <th className="pl-[6px] text-left font-normal">Type</th>
        </tr>
      </thead>
      <tbody>
        <tr className="h-[6px]" />
        {FILES.map(([name, date], i) => (
          <tr key={name} className="h-[21px] text-[#6d6d6d]">
            <td className={`border-y border-l pl-[3px] ${i === 2 ? 'border-[#99d1ff]' : 'border-transparent'}`}><span className="flex items-center gap-1 text-black"><PyIcon />{name}</span></td>
            <td className={`border-y pl-[6px] ${i === 2 ? 'border-[#99d1ff]' : 'border-transparent'}`}>{date}</td>
            <td className={`border-y pl-[6px] ${i === 2 ? 'border-[#99d1ff]' : 'border-transparent'}`}>Python File</td>
          </tr>
        ))}
      </tbody>
    </table>
  </div>
);

const TaskFiles = () => (
  <div className="overflow-hidden pl-[14px]">
    <table className="w-full table-fixed border-separate border-spacing-0">
      <thead>
        <tr className="h-[25px] text-[#4c607a]">
          <th className="w-[258px] border-r border-[#e5e5e5] pl-[3px] text-left font-normal">Name</th>
          <th className="overflow-hidden pl-[6px] text-left font-normal whitespace-nowrap">Date modified</th>
        </tr>
      </thead>
      <tbody>
        <tr className="h-[6px]" />
        <tr className="h-[22px] bg-[#d9d9d9] text-[#6d6d6d]">
          <td className="pl-1"><span className="flex items-center gap-1 text-black"><BatIcon />DailyTasks.bat</span></td>
          <td className="overflow-hidden pl-[6px] whitespace-nowrap">13/02/2017 16:58</td>
        </tr>
      </tbody>
    </table>
  </div>
);

const Divider = ({ className }: { className: string }) => <span className={`h-3 w-px bg-[#e5e5e5] ${className}`} />;

export default function App() {
  return (
    <main className="relative min-h-screen overflow-hidden bg-linear-to-b from-[#2c7b98] to-[#276f8d] font-['Noto_Sans','Open_Sans',sans-serif] text-[11px] leading-4 text-black">
      <TaskScheduler />
      <CreateTask />
      <NewAction />
      <Explorer
        title="C:\Scheduled Tasks"
        frame="top-[638px] left-[828px] h-[319px] w-[455px] border-[#999] shadow-[0_2px_14px_rgba(0,0,0,0.5)]"
        contextTab
        ribbon={<NarrowRibbon />}
        crumbs={['Loca...', 'Schedul...']}
        addressWidth="w-[228px]"
        search="Search Sch..."
        searchWidth="w-[103px]"
        navWidth="w-[140px]"
        navThumb="mb-[8px] h-[17px]"
        table={<TaskFiles />}
        sortCaret="left-[137px]"
        listThumb="w-[126px]"
        status={
          <>
            1 item<Divider className="mx-[10px]" />1 item selected<span className="ml-[7px]">0 bytes</span><Divider className="ml-[10px]" />
          </>
        }
      />
      <Explorer
        title="C:\scripts"
        frame="top-[612px] left-[188px] h-[343px] w-[636px] border-[#1883d7] shadow-[0_2px_14px_rgba(0,0,0,0.5)]"
        active
        ribbon={<WideRibbon />}
        crumbs={['Local Disk (C:)', 'scripts']}
        addressWidth="w-[302px]"
        search="Search scripts"
        searchWidth="w-[202px]"
        navWidth="w-[128px]"
        navThumb="mb-[8px] h-[27px]"
        table={<ScriptFiles />}
        sortCaret="left-[137px]"
        listThumb="w-[365px]"
        status={
          <>
            4 items<Divider className="ml-[10px]" />
          </>
        }
      />
    </main>
  );
}
